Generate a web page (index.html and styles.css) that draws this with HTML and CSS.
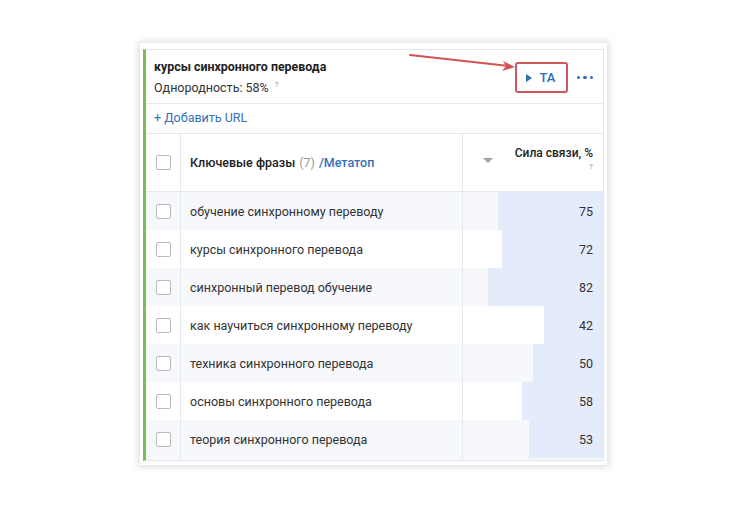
FILE: index.html
```html
<!DOCTYPE html>
<html lang="ru">
<head>
<meta charset="utf-8">
<link rel="stylesheet" href="styles.css">
</head>
<body>
<div class="frame">
  <div class="card">
    <div class="head">
      <div class="head-text">
        <div class="title">курсы синхронного перевода</div>
        <div class="homog">Однородность: 58% <sup class="q">?</sup></div>
      </div>
      <div class="head-actions">
        <button class="ta"><span class="tri"></span>TA</button>
        <span class="dots"><i></i><i></i><i></i></span>
      </div>
    </div>
    <div class="addurl">+ Добавить URL</div>
    <div class="table">
      <div class="row hdr">
        <div class="c-cb"><span class="cb"></span></div>
        <div class="c-kw"><span class="kw-title">Ключевые фразы</span> <span class="cnt">(7)</span> <span class="meta">/Метатоп</span></div>
        <div class="c-val hdr-val">
          <span class="sort"></span>
          <div class="val-title">Сила связи, %<span class="q2">?</span></div>
        </div>
      </div>
      <div class="row alt">
        <div class="c-cb"><span class="cb"></span></div>
        <div class="c-kw">обучение синхронному переводу</div>
        <div class="c-val" style="--w:75%">75</div>
      </div>
      <div class="row">
        <div class="c-cb"><span class="cb"></span></div>
        <div class="c-kw">курсы синхронного перевода</div>
        <div class="c-val" style="--w:72%">72</div>
      </div>
      <div class="row alt">
        <div class="c-cb"><span class="cb"></span></div>
        <div class="c-kw">синхронный перевод обучение</div>
        <div class="c-val" style="--w:82%">82</div>
      </div>
      <div class="row">
        <div class="c-cb"><span class="cb"></span></div>
        <div class="c-kw">как научиться синхронному переводу</div>
        <div class="c-val" style="--w:42%">42</div>
      </div>
      <div class="row alt">
        <div class="c-cb"><span class="cb"></span></div>
        <div class="c-kw">техника синхронного перевода</div>
        <div class="c-val" style="--w:50%">50</div>
      </div>
      <div class="row">
        <div class="c-cb"><span class="cb"></span></div>
        <div class="c-kw">основы синхронного перевода</div>
        <div class="c-val" style="--w:58%">58</div>
      </div>
      <div class="row alt">
        <div class="c-cb"><span class="cb"></span></div>
        <div class="c-kw">теория синхронного перевода</div>
        <div class="c-val" style="--w:53%">53</div>
      </div>
      <div class="row tail alt">
        <div class="c-cb"></div>
        <div class="c-kw"></div>
        <div class="c-val" style="--w:0%"></div>
      </div>
    </div>
  </div>
  <svg class="arrow" width="120" height="24" viewBox="0 0 120 24">
    <line x1="1" y1="2" x2="100" y2="13" stroke="#d25252" stroke-width="2" stroke-linecap="round"/>
    <polygon points="106,14 94,8 97,13 93,18" fill="#d25252"/>
  </svg>
</div>
</body>
</html>
```

FILE: styles.css
```css
* { box-sizing: border-box; }
html, body { margin: 0; padding: 0; background: #fff; }
body {
  font-family: Roboto, "Noto Sans", "Liberation Sans", sans-serif;
  color: #333;
  width: 750px;
  height: 510px;
  overflow: hidden;
}
.frame {
  position: relative;
  margin: 43px 0 0 140px;
  width: 467px;
  height: 422px;
  background: #fff;
  padding: 6px 3px 4px 3px;
  box-shadow: 0 0 7px 2px rgba(0,0,0,0.13);
}
.card {
  height: 100%;
  border: 1px solid #e2e6ec;
  border-left: 3px solid #7cbd5a;
  background: #fff;
  display: flex;
  flex-direction: column;
  overflow: hidden;
}
.head {
  flex-shrink: 0;
  height: 54px;
  display: flex;
  align-items: flex-start;
  justify-content: space-between;
  padding: 9px 10px 0 8px;
  border-bottom: 1px solid #e6e9ee;
}
.title {
  font-size: 12.4px;
  font-weight: 700;
  color: #222;
  line-height: 15px;
}
.homog {
  margin-top: 3px;
  font-size: 12.5px;
  color: #333;
  line-height: 15px;
}
.q {
  font-size: 8px;
  color: #999;
  vertical-align: 5px;
  margin-left: 3px;
}
.head-actions {
  display: flex;
  align-items: center;
  margin-top: 3px;
}
.ta {
  width: 53px;
  height: 31px;
  border: 2px solid #d0585a;
  border-radius: 3px;
  background: #fff;
  display: flex;
  align-items: center;
  padding: 0 0 0 9px;
  font-family: Roboto, "Noto Sans", sans-serif;
  font-size: 13px;
  font-weight: 500;
  color: #2f6db4;
  cursor: pointer;
}
.tri {
  width: 0;
  height: 0;
  border-top: 4px solid transparent;
  border-bottom: 4px solid transparent;
  border-left: 6px solid #2f6db4;
  margin-right: 8px;
}
.dots {
  display: flex;
  gap: 3px;
  margin-left: 9px;
}
.dots i {
  width: 3.5px;
  height: 3.5px;
  border-radius: 50%;
  background: #2f6db4;
}
.addurl {
  flex-shrink: 0;
  height: 30px;
  line-height: 28px;
  padding-left: 8px;
  font-size: 12.5px;
  color: #3570b6;
  border-bottom: 1px solid #e6e9ee;
}
.table { flex: 1; }
.row {
  display: grid;
  grid-template-columns: 35px 282px 1fr;
  height: 38px;
  font-size: 12.5px;
  color: #333;
}
.row.alt { background: #f6f8fc; }
.row.hdr {
  height: 58px;
  border-bottom: 1px solid #e6e9ee;
  background: #fff;
}
.c-cb {
  display: flex;
  align-items: center;
  justify-content: center;
  border-right: 1px solid #e6e9ee;
}
.cb {
  width: 15px;
  height: 15px;
  border: 1px solid #b9b9b9;
  border-radius: 2px;
  background: #fff;
}
.c-kw {
  display: flex;
  align-items: center;
  padding-left: 9px;
  border-right: 1px solid #e6e9ee;
  white-space: nowrap;
}
.kw-title { color: #222; font-weight: 500; }
.cnt { color: #999; margin: 0 4px; }
.meta { color: #3570b6; font-weight: 500; }
.c-val {
  display: flex;
  align-items: center;
  justify-content: flex-end;
  padding-right: 10px;
  background: linear-gradient(to left, #e4ecfb var(--w), transparent var(--w));
}
.hdr-val {
  background: none;
  justify-content: space-between;
  align-items: flex-start;
  padding-left: 20px;
  padding-top: 12px;
}
.sort {
  margin-top: 12px;
  width: 0;
  height: 0;
  border-left: 5px solid transparent;
  border-right: 5px solid transparent;
  border-top: 5px solid #a0a0a0;
}
.val-title {
  font-size: 12px;
  font-weight: 500;
  color: #222;
  text-align: right;
  line-height: 14px;
}
.q2 {
  display: block;
  font-size: 8px;
  color: #aaa;
  line-height: 12px;
  margin-top: 1px;
}
.row.tail { height: 6px; }
.arrow {
  position: absolute;
  left: 269px;
  top: 10px;
}
```
